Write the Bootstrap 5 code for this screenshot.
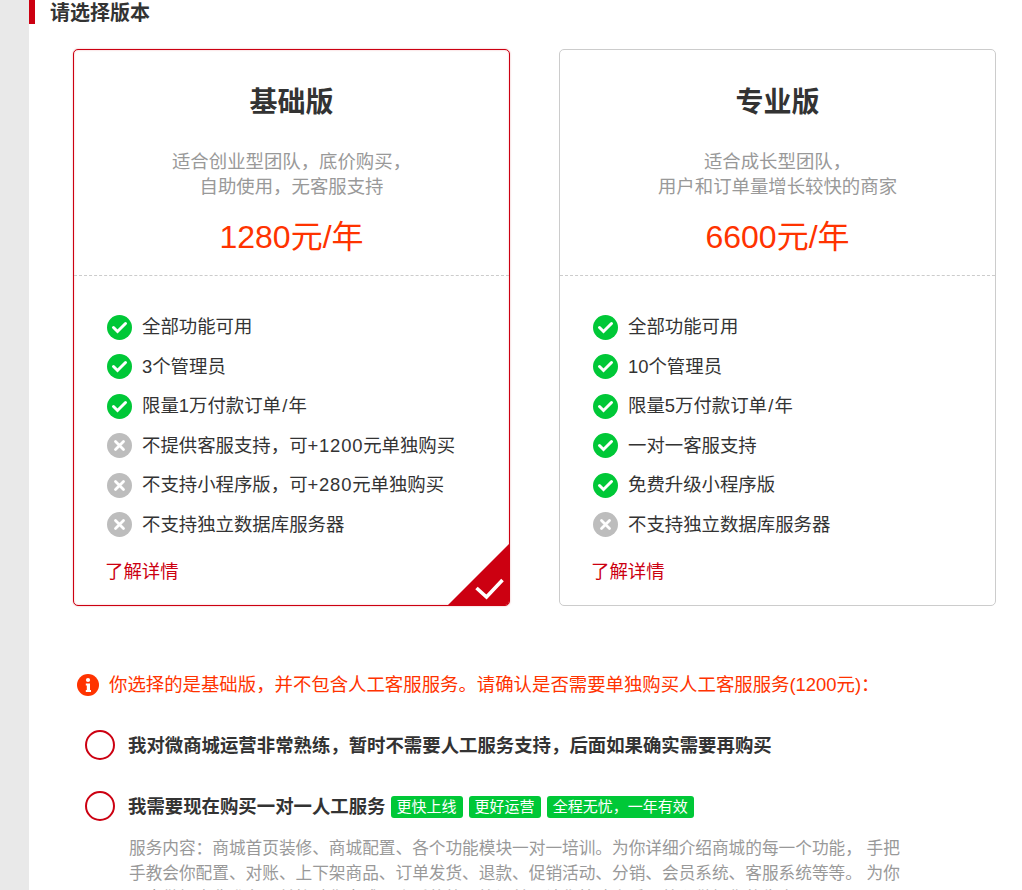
<!DOCTYPE html>
<html lang="zh-CN">
<head>
  <meta charset="UTF-8">
  <meta name="viewport" content="width=device-width, initial-scale=1">
  <title>请选择版本</title>
  <link href="https://cdn.jsdelivr.net/npm/bootstrap@5.3.0/dist/css/bootstrap.min.css" rel="stylesheet">
  <style>
    html, body { height: 890px; overflow: hidden; }
    body { background: #e9e9e9; font-family: "Liberation Sans", "Noto Sans CJK SC", sans-serif; color: #333; }
    .page-wrap { margin-left: 29px; background: #fff; height: 890px; overflow: hidden; }
    .sec-title { height: 24px; border-left: 6px solid #cc0011; padding-left: 15px; font-size: 20px; font-weight: 700; line-height: 26px; margin-bottom: 25px; }
    .plans { padding-left: 44px; gap: 49px; }
    .plan-box { width: 437px; height: 557px; border: 1px solid #ccc; border-radius: 5px; background: #fff; position: relative; overflow: hidden; }
    .plan-box.picked { border-color: #cc0011; box-shadow: 0 0 2px rgba(204, 0, 17, .35), inset 0 0 2px rgba(204, 0, 17, .3); }
    .plan-top { height: 226px; border-bottom: 1px dashed #ccc; padding-top: 32px; text-align: center; }
    .plan-name { font-size: 28px; font-weight: 700; line-height: 42px; margin: 0 0 25px; }
    .plan-desc { font-size: 18.4px; line-height: 25px; color: #999; margin: 0; }
    .plan-price { font-size: 32px; line-height: 44px; color: #ff3300; margin-top: 16px; }
    .feat-list { list-style: none; margin: 0; padding: 31.4px 0 0 33px; }
    .feat-list li { display: flex; align-items: center; gap: 10px; height: 39.5px; font-size: 18.4px; white-space: nowrap; }
    .feat-list svg { flex: none; }
    .num-wide { letter-spacing: .8px; }
    .slash-wide { padding: 0 1.2px; }
    .more-link { display: block; margin: 15px 0 0 31px; font-size: 18.4px; line-height: 26px; color: #cc0011; text-decoration: none; }
    .corner-mark { position: absolute; right: 0; bottom: 0; }
    .notice { padding: 65px 0 0 48px; font-size: 18.4px; line-height: 28px; color: #ff3300; gap: 10px; }
    .choice { padding-left: 56px; gap: 13px; font-size: 18.4px; font-weight: 700; }
    .choice-text { padding-top: 2px; }
    .choice-a { margin-top: 31px; }
    .choice-b { margin-top: 31px; }
    .ring { flex: none; width: 30px; height: 30px; border: 2px solid #cc0011; border-radius: 50%; }
    .tag-green { display: inline-block; background: #00c837; color: #fff; font-size: 15px; font-weight: 400; line-height: 22px; padding: 0 6px; border-radius: 3px; margin-left: 6px; vertical-align: 1px; }
    .tag-green:first-of-type { margin-left: 0; }
    .service-text { margin: 15px 0 0 100px; width: 775px; font-size: 16.67px; line-height: 25px; color: #999; }
  </style>
</head>
<body>
<div class="page-wrap">
  <div class="sec-title">请选择版本</div>

  <div class="plans d-flex">
    <div class="plan-box picked">
      <div class="plan-top">
        <h2 class="plan-name">基础版</h2>
        <p class="plan-desc">适合创业型团队，底价购买，<br>自助使用，无客服支持</p>
        <div class="plan-price">1280元/年</div>
      </div>
      <ul class="feat-list">
        <li><svg width="25" height="25" viewBox="0 0 25 25"><circle cx="12.5" cy="12.5" r="12.5" fill="#00c837"/><path d="M6.5 12.5l4 4 8-8" fill="none" stroke="#fff" stroke-width="3" stroke-linecap="round"/></svg>全部功能可用</li>
        <li><svg width="25" height="25" viewBox="0 0 25 25"><circle cx="12.5" cy="12.5" r="12.5" fill="#00c837"/><path d="M6.5 12.5l4 4 8-8" fill="none" stroke="#fff" stroke-width="3" stroke-linecap="round"/></svg>3个管理员</li>
        <li><svg width="25" height="25" viewBox="0 0 25 25"><circle cx="12.5" cy="12.5" r="12.5" fill="#00c837"/><path d="M6.5 12.5l4 4 8-8" fill="none" stroke="#fff" stroke-width="3" stroke-linecap="round"/></svg><span>限量1万付款订单<span class="slash-wide">/</span>年</span></li>
        <li><svg width="25" height="25" viewBox="0 0 25 25"><circle cx="12.5" cy="12.5" r="12.5" fill="#bdbdbd"/><path d="M8.5 8.5l8 8M16.5 8.5l-8 8" fill="none" stroke="#fff" stroke-width="2.8" stroke-linecap="round"/></svg><span>不提供客服支持，可<span class="num-wide">+1200</span>元单独购买</span></li>
        <li><svg width="25" height="25" viewBox="0 0 25 25"><circle cx="12.5" cy="12.5" r="12.5" fill="#bdbdbd"/><path d="M8.5 8.5l8 8M16.5 8.5l-8 8" fill="none" stroke="#fff" stroke-width="2.8" stroke-linecap="round"/></svg><span>不支持小程序版，可<span class="num-wide">+280</span>元单独购买</span></li>
        <li><svg width="25" height="25" viewBox="0 0 25 25"><circle cx="12.5" cy="12.5" r="12.5" fill="#bdbdbd"/><path d="M8.5 8.5l8 8M16.5 8.5l-8 8" fill="none" stroke="#fff" stroke-width="2.8" stroke-linecap="round"/></svg>不支持独立数据库服务器</li>
      </ul>
      <a class="more-link" href="#">了解详情</a>
      <svg class="corner-mark" width="61" height="61" viewBox="0 0 61 61"><path d="M61 0V61H0Z" fill="#cc0011"/><path d="M28.5 44l10 9 16-17" fill="none" stroke="#fff" stroke-width="3.6"/></svg>
    </div>

    <div class="plan-box">
      <div class="plan-top">
        <h2 class="plan-name">专业版</h2>
        <p class="plan-desc">适合成长型团队，<br>用户和订单量增长较快的商家</p>
        <div class="plan-price">6600元/年</div>
      </div>
      <ul class="feat-list">
        <li><svg width="25" height="25" viewBox="0 0 25 25"><circle cx="12.5" cy="12.5" r="12.5" fill="#00c837"/><path d="M6.5 12.5l4 4 8-8" fill="none" stroke="#fff" stroke-width="3" stroke-linecap="round"/></svg>全部功能可用</li>
        <li><svg width="25" height="25" viewBox="0 0 25 25"><circle cx="12.5" cy="12.5" r="12.5" fill="#00c837"/><path d="M6.5 12.5l4 4 8-8" fill="none" stroke="#fff" stroke-width="3" stroke-linecap="round"/></svg>10个管理员</li>
        <li><svg width="25" height="25" viewBox="0 0 25 25"><circle cx="12.5" cy="12.5" r="12.5" fill="#00c837"/><path d="M6.5 12.5l4 4 8-8" fill="none" stroke="#fff" stroke-width="3" stroke-linecap="round"/></svg><span>限量5万付款订单<span class="slash-wide">/</span>年</span></li>
        <li><svg width="25" height="25" viewBox="0 0 25 25"><circle cx="12.5" cy="12.5" r="12.5" fill="#00c837"/><path d="M6.5 12.5l4 4 8-8" fill="none" stroke="#fff" stroke-width="3" stroke-linecap="round"/></svg>一对一客服支持</li>
        <li><svg width="25" height="25" viewBox="0 0 25 25"><circle cx="12.5" cy="12.5" r="12.5" fill="#00c837"/><path d="M6.5 12.5l4 4 8-8" fill="none" stroke="#fff" stroke-width="3" stroke-linecap="round"/></svg>免费升级小程序版</li>
        <li><svg width="25" height="25" viewBox="0 0 25 25"><circle cx="12.5" cy="12.5" r="12.5" fill="#bdbdbd"/><path d="M8.5 8.5l8 8M16.5 8.5l-8 8" fill="none" stroke="#fff" stroke-width="2.8" stroke-linecap="round"/></svg>不支持独立数据库服务器</li>
      </ul>
      <a class="more-link" href="#">了解详情</a>
    </div>
  </div>

  <div class="notice d-flex align-items-center">
    <svg width="22" height="22" viewBox="0 0 22 22"><circle cx="11" cy="11" r="11" fill="#ff3300"/><circle cx="11" cy="6" r="2.1" fill="#fff"/><path d="M8.8 9.5H13V16H14V18H8.8V16H9.8V11.5H8.8Z" fill="#fff"/></svg>
    <span>你选择的是基础版，并不包含人工客服服务。请确认是否需要单独购买人工客服服务(1200元)：</span>
  </div>

  <div class="choice choice-a d-flex align-items-center">
    <span class="ring"></span>
    <span class="choice-text">我对微商城运营非常熟练，暂时不需要人工服务支持，后面如果确实需要再购买</span>
  </div>
  <div class="choice choice-b d-flex align-items-center">
    <span class="ring"></span>
    <span class="choice-text">我需要现在购买一对一人工服务 <span class="tag-green">更快上线</span><span class="tag-green">更好运营</span><span class="tag-green">全程无忧，一年有效</span></span>
  </div>
  <p class="service-text">服务内容：商城首页装修、商城配置、各个功能模块一对一培训。为你详细介绍商城的每一个功能， 手把手教会你配置、对账、上下架商品、订单发货、退款、促销活动、分销、会员系统、客服系统等等。 为你一步做好卖货准备，并协助你完成开店后的第一笔订单，让你快速上手，放心做好你的生意。</p>
</div>
<script src="https://cdn.jsdelivr.net/npm/bootstrap@5.3.0/dist/js/bootstrap.bundle.min.js"></script>
</body>
</html>
